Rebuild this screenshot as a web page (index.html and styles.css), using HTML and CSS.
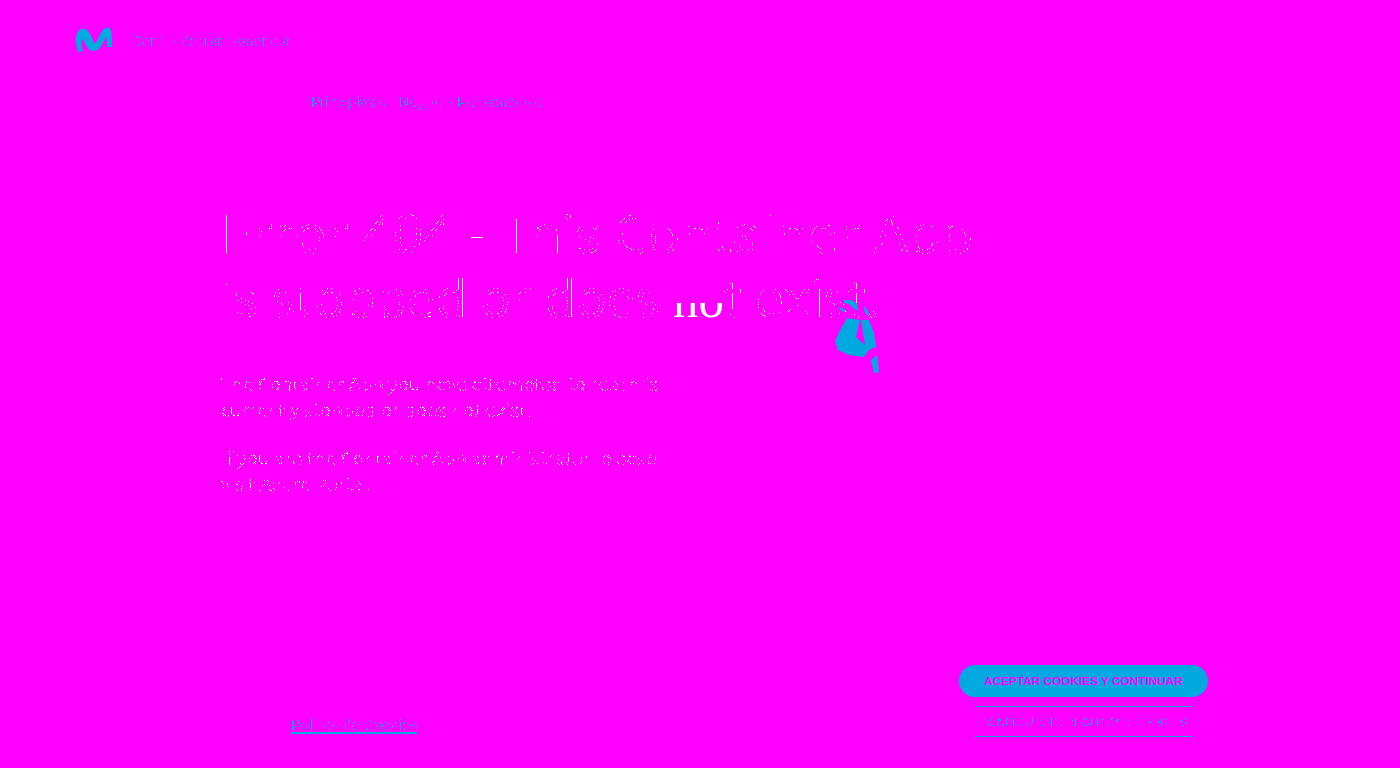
FILE: index.html
```html
<!DOCTYPE html>
<html lang="es">
<head>
  <meta charset="utf-8">
  <title>Error 404 - Container App</title>
  <link rel="stylesheet" href="styles.css">
</head>
<body>

<!-- keeps only thin bands of the text edge, the letters themselves drop out -->
<svg class="defs" width="0" height="0" aria-hidden="true">
  <filter id="edge-dots" x="0" y="0" width="100%" height="100%" color-interpolation-filters="sRGB">
    <feComponentTransfer>
      <feFuncA type="discrete" tableValues="0 0 0 0 1 0 0 0 0 1 0 0 0 1 0 0"></feFuncA>
    </feComponentTransfer>
  </filter>
</svg>

<div class="page">

  <header class="top">
    <a class="brand" href="#">
      <svg class="logo" viewBox="0 0 38 26" aria-label="Movistar">
        <path d="M3 26 L1 18 C0 10 2 4 7 3 C12 2 15 7 17 12 C18 15 19 17 20 17 C22 17 24 9 27 5 C30 1 34 0 36 4 C37 8 37 15 37 21 L32 21 C32 16 32 12 31 11 C29 14 26 25 19 25 C13 25 11 19 9 15 C8 13 7 12 7 14 C6 18 7 23 8 25 Z" fill="#00a9e0"></path>
      </svg>
      <span class="dots">Centro de transparencia</span>
    </a>
  </header>

  <nav class="crumb">
    <a class="dots" href="#">Principios de Negocio Responsable</a>
  </nav>

  <main class="message">
    <h1>
      <span class="line-one dots-white">Error 404 - This Container App</span>
      <span class="line-two"><span class="dots-white">is stopped or does</span> <span class="solid">no</span><span class="dots-white">t exist.</span></span>
      <svg class="hand" viewBox="0 0 65 90" aria-hidden="true">
        <path d="M23 28 L15 42 L11 52 L14 60 L25 65 L40 67 L45 60 L52 57 L50 43 L45 30 L37 30 L41 55 L32 47 L36 30 Z"></path>
        <path d="M20 10 L27 10 L33 13 L34 21 L29 18 L25 14 L20 13 Z"></path>
        <path d="M15 17 L22 20 L20 22 L16 20 Z"></path>
        <path d="M41 16 L45 23 L43 26 L40 20 Z"></path>
        <path d="M47 70 L53 65 L55 82 L50 83 Z"></path>
      </svg>
    </h1>
    <p class="dots-white">The Container App you have attempted to reach is<br>currently stopped or does not exist.</p>
    <p class="dots-white">If you are the Container App administrator, please<br>visit Azure Portal.</p>
  </main>

  <footer class="bottom">
    <a class="policy" href="#"><span class="dots-solid">Política de Cookies</span></a>
    <div class="cookies">
      <button class="accept">ACEPTAR COOKIES Y CONTINUAR</button>
      <button class="config"><span class="dots">CONFIGURAR: RECHAZAR COOKIES</span></button>
    </div>
  </footer>

</div>

</body>
</html>
```

FILE: styles.css
```css
body{
  margin: 0;
  background-color: #f0f;
  font-family: "Liberation Sans", Arial, sans-serif;
}

a{
  color: #00a9e0;
  text-decoration: none;
}

.defs{
  position: absolute;
}

.dots{
  color: #00a9e0;
  filter: url(#edge-dots);
}

.dots-white{
  color: #fff;
  filter: url(#edge-dots);
}

.page{
  height: 768px;
  display: flex;
  flex-direction: column;
  overflow: hidden;
}

/* header ================================ */

.top{
  height: 26px;
  padding: 26px 0 0 75px;
}

.brand{
  display: flex;
  align-items: center;
  gap: 19px;
}

.logo{
  width: 38px;
  height: 26px;
}

.brand .dots{
  padding-top: 4px;
  font-size: 14.7px;
}

.crumb{
  margin-top: 40px;
  padding-left: 311px;
  font-size: 14.7px;
  line-height: 20px;
}

.crumb .dots{
  display: inline-block;
}

/* message ================================ */

.message{
  flex: 1;
  padding: 88px 0 0 221px;
}

h1{
  position: relative;
  margin: 0 0 38px;
  font-family: "Open Sans", sans-serif;
  font-weight: normal;
  line-height: 65px;
}

.line-one{
  display: block;
  font-size: 53.5px;
}

.line-two{
  display: block;
  font-size: 51px;
}

.line-two .dots-white{
  display: inline-block;
}

.solid{
  font-family: "Liberation Serif", serif;
  background: linear-gradient(#f0f 55%, #fff 55%);
  -webkit-background-clip: text;
  background-clip: text;
  color: transparent;
}

.hand{
  position: absolute;
  left: 603px;
  top: 90px;
  width: 65px;
  height: 90px;
  fill: #00a9e0;
}

p{
  margin: 0 0 22px;
  font-family: "Open Sans", sans-serif;
  font-size: 18.7px;
  line-height: 26px;
}

/* cookies ================================ */

.bottom{
  display: flex;
  justify-content: space-between;
  align-items: flex-end;
  padding: 0 192px 31px 291px;
}

.policy{
  margin-bottom: 3px;
  font-size: 14.7px;
  line-height: 14px;
  border-bottom: 2px solid #00a9e0;
}

.dots-solid{
  color: #00a9e0;
  filter: url(#edge-dots);
  display: inline-block;
}

.cookies{
  width: 249px;
  display: flex;
  flex-direction: column;
  align-items: center;
  gap: 9px;
}

.accept{
  width: 100%;
  height: 32px;
  border: 0;
  border-radius: 16px;
  background-color: #00a9e0;
  color: #f0f;
  font-family: inherit;
  font-size: 11.8px;
  font-weight: bold;
}

.config{
  width: 218px;
  height: 31px;
  padding: 0;
  border: 0;
  border-top: 1px solid #00a9e0;
  border-bottom: 1px solid #00a9e0;
  background: none;
  font-family: inherit;
  font-size: 11px;
  letter-spacing: 0.5px;
  white-space: nowrap;
}

.config .dots{
  display: inline-block;
}
```
